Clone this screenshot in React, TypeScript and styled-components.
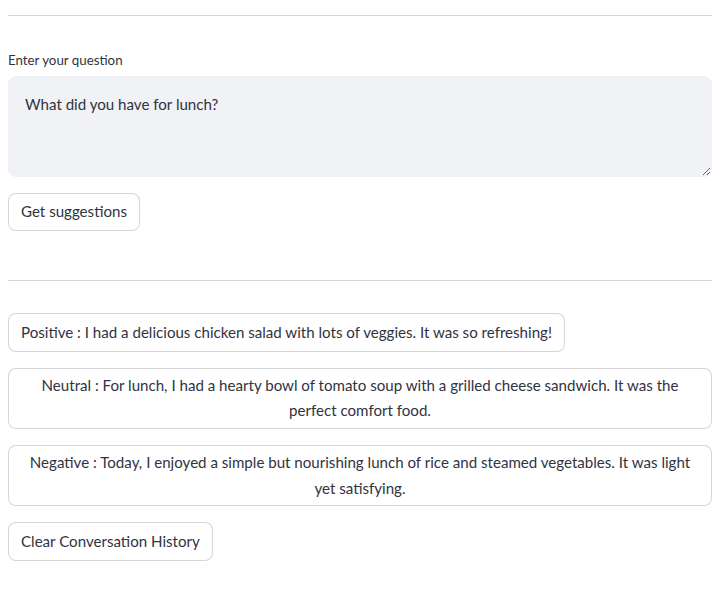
import React, { useState } from 'react'
import styled, { createGlobalStyle } from 'styled-components'

const GlobalStyle = createGlobalStyle`
    html, body {
        margin: 0;
        padding: 0;
        background: #FFF;
    }
    body {
        font-family: Lato, "Noto Sans", sans-serif;
        color: rgb(49, 51, 63);
    }
    * {
        box-sizing: border-box;
    }
`

const Main = styled.main`
    display: flex;
    flex-direction: column;
    gap: 1rem;
    padding: 15px 11px 40px 8px;
`

const Divider = styled.hr<{ $spaced?: boolean }>`
    margin: ${p => p.$spaced ? '33px 0 1rem' : '0 0 2rem'};
    height: 1px;
    border: none;
    background: rgba(49, 51, 63, 0.2);
`

const Field = styled.div`
    display: flex;
    flex-direction: column;
`

const Label = styled.label`
    font-size: 13.3px;
    line-height: 24px;
    min-height: 24px;
    margin-bottom: 4px;
`

const TextArea = styled.textarea`
    width: 100%;
    height: 101px;
    padding: 15px 16px 14px;
    border: 1px solid #F0F2F6;
    border-radius: 8px;
    background: #F0F2F6;
    color: rgb(49, 51, 63);
    font-family: inherit;
    font-size: 15.1px;
    line-height: 25.6px;
    outline: none;
    resize: vertical;
`

const Button = styled.button`
    align-self: flex-start;
    max-width: 100%;
    min-height: 38.4px;
    padding: 4px 12px;
    border: 1px solid rgba(49, 51, 63, 0.2);
    border-radius: 8px;
    background: #FFF;
    color: rgb(49, 51, 63);
    font-family: inherit;
    font-size: 15.1px;
    line-height: 25.6px;
    text-align: center;
    cursor: pointer;
    &:hover {
        border-color: rgb(255, 75, 75);
        color: rgb(255, 75, 75);
    }
`

const suggestions = [
    { tone: 'Positive', text: 'I had a delicious chicken salad with lots of veggies. It was so refreshing!' },
    { tone: 'Neutral', text: 'For lunch, I had a hearty bowl of tomato soup with a grilled cheese sandwich. It was the perfect comfort food.' },
    { tone: 'Negative', text: 'Today, I enjoyed a simple but nourishing lunch of rice and steamed vegetables. It was light yet satisfying.' },
]

const App = () => {
    const [question, setQuestion] = useState('What did you have for lunch?')
    const [shown, setShown] = useState(true)

    return (
        <>
            <GlobalStyle />
            <Main>
                <div>
                    <Divider />
                    <Field>
                        <Label htmlFor="question">Enter your question</Label>
                        <TextArea id="question" value={question} onChange={e => setQuestion(e.target.value)} />
                    </Field>
                </div>
                <Button onClick={() => setShown(true)}>Get suggestions</Button>
                <Divider $spaced />
                {shown && suggestions.map(s => (
                    <Button key={s.tone}>{s.tone} : {s.text}</Button>
                ))}
                <Button onClick={() => setShown(false)}>Clear Conversation History</Button>
            </Main>
        </>
    )
}

export default App
